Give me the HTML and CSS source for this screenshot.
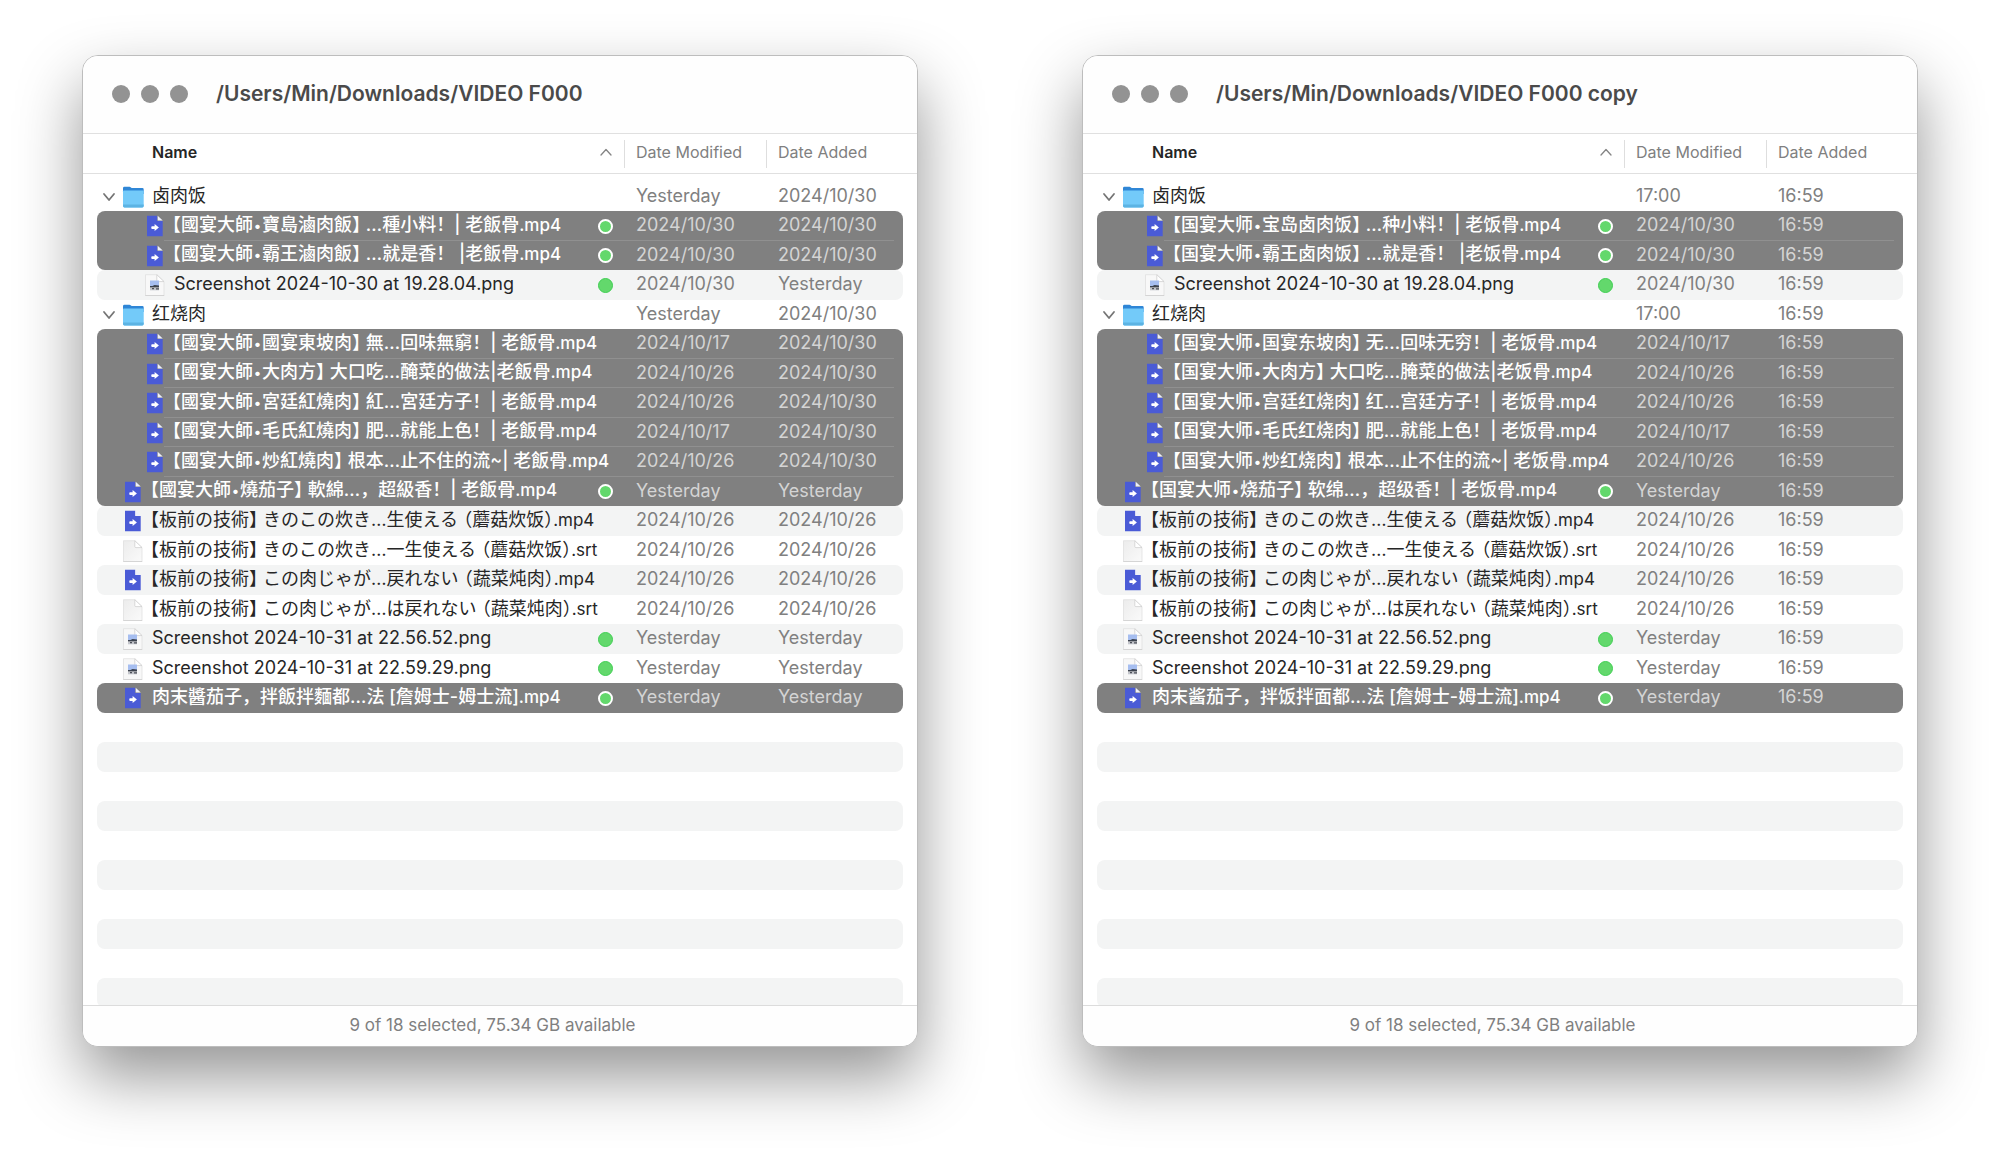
FILE: index.html
```html
<!DOCTYPE html>
<html lang="en">
<head>
<meta charset="utf-8">
<title>Downloads</title>
<link rel="stylesheet" href="styles.css">
</head>
<body>
<svg class="sprite" aria-hidden="true">
  <defs>
    <linearGradient id="paper" x1="0" y1="0" x2="1" y2="1"><stop offset="0" stop-color="#ececec"/><stop offset="1" stop-color="#fafafa"/></linearGradient>
  </defs>
  <symbol id="i-folder" viewBox="0 0 22 22">
    <path d="M1 2.2Q1 .8 2.400 .8H7.500Q8.300 .8 8.900 1.400L9.700 2.100H20.400Q21.700 2.100 21.700 3.400V8H1Z" fill="#2f86d6"/>
    <path d="M1 5.200Q1 4.400 1.800 4.400H20.900Q21.700 4.400 21.700 5.200V20Q21.700 21.400 20.300 21.400H2.400Q1 21.400 1 20Z" fill="#73caf9"/>
    <path d="M1 18.500H21.700V20Q21.700 21.400 20.300 21.400H2.400Q1 21.400 1 20Z" fill="#5cb3e3"/>
  </symbol>
  <symbol id="i-video" viewBox="0 0 22 22">
    <path d="M3 .8H13.200V6H18.700V21.300H3Z" fill="#4a5bd6"/>
    <path d="M13.700 .8L18.700 5.400H13.700Z" fill="#eef0fb"/>
    <path d="M7.300 12Q7.300 11.200 8.200 11.200H10.600V9L14.900 12.500L10.600 16V13.900H8.200Q7.300 13.900 7.300 13Z" fill="#fff"/>
  </symbol>
  <symbol id="i-doc" viewBox="0 0 22 22">
    <path d="M1.500 .7H12.800L20 7.600V21.600H1.500Z" fill="url(#paper)" stroke="#dcdcdc" stroke-width=".7"/>
    <path d="M12.800 .7V6.600Q12.800 7.600 13.800 7.600H20Z" fill="#fff" stroke="#cfcfcf" stroke-width=".8"/>
    <path d="M1.300 21.700H20.200" stroke="#c9c9c9" stroke-width=".8"/>
  </symbol>
  <symbol id="i-image" viewBox="0 0 22 22">
    <path d="M1.500 .7H12.800L20 7.600V21.600H1.500Z" fill="#f8f8f8" stroke="#dcdcdc" stroke-width=".7"/>
    <path d="M12.800 .7V6.600Q12.800 7.600 13.800 7.600H20Z" fill="#fff" stroke="#cfcfcf" stroke-width=".8"/>
    <path d="M6 6.500H15V12H6Z" fill="#a6bef0"/>
    <path d="M6 12H8.500L10.500 11L15 11.500V13.500H6Z" fill="#3c424e"/>
    <path d="M6 14H15V16.300H6Z" fill="#c4c6cc"/>
    <path d="M8 14.600H10M12 14.800H15" stroke="#4d5058" stroke-width="1.200"/>
    <path d="M1.300 21.700H20.200" stroke="#c9c9c9" stroke-width=".8"/>
  </symbol>
  <symbol id="i-down" viewBox="0 0 14 10">
    <path d="M2 2L7 8L12 2" fill="none" stroke="#757575" stroke-width="1.800" stroke-linecap="round" stroke-linejoin="round"/>
  </symbol>
  <symbol id="i-up" viewBox="0 0 14 10">
    <path d="M2 8L7 2.500L12 8" fill="none" stroke="#858585" stroke-width="1.300" stroke-linecap="round" stroke-linejoin="round"/>
  </symbol>
</svg>
<main class="desk">
<section class="window">
  <header class="titlebar">
    <button class="light" aria-label="Close"></button><button class="light" aria-label="Minimize"></button><button class="light" aria-label="Zoom"></button>
    <h1 class="title">/Users/Min/Downloads/VIDEO F000</h1>
  </header>
  <table class="files">
    <thead><tr><th class="head-name" scope="col">Name<svg class="sort"><use href="#i-up"/></svg></th><th class="head-date" scope="col">Date Modified</th><th class="head-date" scope="col">Date Added</th></tr></thead>
    <tbody>
      <tr><td class="name"><button class="toggle" aria-label="Collapse"><svg><use href="#i-down"/></svg></button><svg class="icon"><use href="#i-folder"/></svg><span class="text" lang="zh-Hans">卤肉饭</span></td><td class="date">Yesterday</td><td class="date">2024/10/30</td></tr>
      <tr class="sel first"><td class="name nested"><svg class="icon"><use href="#i-video"/></svg><span class="text" lang="zh-Hans"><b>【</b>國宴大師<small>•</small>寶島滷肉飯<b>】</b> …種小料！| 老飯骨<i>.mp4</i></span><span class="tag"></span></td><td class="date">2024/10/30</td><td class="date">2024/10/30</td></tr>
      <tr class="sel last"><td class="name nested"><svg class="icon"><use href="#i-video"/></svg><span class="text" lang="zh-Hans"><b>【</b>國宴大師<small>•</small>霸王滷肉飯<b>】</b> …就是香！ |老飯骨<i>.mp4</i></span><span class="tag"></span></td><td class="date">2024/10/30</td><td class="date">2024/10/30</td></tr>
      <tr><td class="name nested"><svg class="icon"><use href="#i-image"/></svg><span class="text">Screenshot 2024-10-30 at 19.28.04.png</span><span class="tag"></span></td><td class="date">2024/10/30</td><td class="date">Yesterday</td></tr>
      <tr><td class="name"><button class="toggle" aria-label="Collapse"><svg><use href="#i-down"/></svg></button><svg class="icon"><use href="#i-folder"/></svg><span class="text" lang="zh-Hans">红烧肉</span></td><td class="date">Yesterday</td><td class="date">2024/10/30</td></tr>
      <tr class="sel first"><td class="name nested"><svg class="icon"><use href="#i-video"/></svg><span class="text" lang="zh-Hans"><b>【</b>國宴大師<small>•</small>國宴東坡肉<b>】</b> 無…回味無窮！| 老飯骨<i>.mp4</i></span></td><td class="date">2024/10/17</td><td class="date">2024/10/30</td></tr>
      <tr class="sel"><td class="name nested"><svg class="icon"><use href="#i-video"/></svg><span class="text" lang="zh-Hans"><b>【</b>國宴大師<small>•</small>大肉方<b>】</b> 大口吃…醃菜的做法|老飯骨<i>.mp4</i></span></td><td class="date">2024/10/26</td><td class="date">2024/10/30</td></tr>
      <tr class="sel"><td class="name nested"><svg class="icon"><use href="#i-video"/></svg><span class="text" lang="zh-Hans"><b>【</b>國宴大師<small>•</small>宮廷紅燒肉<b>】</b> 紅…宮廷方子！| 老飯骨<i>.mp4</i></span></td><td class="date">2024/10/26</td><td class="date">2024/10/30</td></tr>
      <tr class="sel"><td class="name nested"><svg class="icon"><use href="#i-video"/></svg><span class="text" lang="zh-Hans"><b>【</b>國宴大師<small>•</small>毛氏紅燒肉<b>】</b> 肥…就能上色！| 老飯骨<i>.mp4</i></span></td><td class="date">2024/10/17</td><td class="date">2024/10/30</td></tr>
      <tr class="sel"><td class="name nested"><svg class="icon"><use href="#i-video"/></svg><span class="text" lang="zh-Hans"><b>【</b>國宴大師<small>•</small>炒紅燒肉<b>】</b> 根本…止不住的流~| 老飯骨<i>.mp4</i></span></td><td class="date">2024/10/26</td><td class="date">2024/10/30</td></tr>
      <tr class="sel last"><td class="name"><svg class="icon"><use href="#i-video"/></svg><span class="text" lang="zh-Hans"><b>【</b>國宴大師<small>•</small>燒茄子<b>】</b> 軟綿…，超級香！| 老飯骨<i>.mp4</i></span><span class="tag"></span></td><td class="date">Yesterday</td><td class="date">Yesterday</td></tr>
      <tr><td class="name"><svg class="icon"><use href="#i-video"/></svg><span class="text" lang="ja"><b>【</b>板前の技術<b>】</b> きのこの炊き…生使える <b>（</b>蘑菇炊饭<b>）</b><i>.mp4</i></span></td><td class="date">2024/10/26</td><td class="date">2024/10/26</td></tr>
      <tr><td class="name"><svg class="icon"><use href="#i-doc"/></svg><span class="text" lang="ja"><b>【</b>板前の技術<b>】</b> きのこの炊き…一生使える <b>（</b>蘑菇炊饭<b>）</b><i>.srt</i></span></td><td class="date">2024/10/26</td><td class="date">2024/10/26</td></tr>
      <tr><td class="name"><svg class="icon"><use href="#i-video"/></svg><span class="text" lang="ja"><b>【</b>板前の技術<b>】</b> この肉じゃが…戻れない <b>（</b>蔬菜炖肉<b>）</b><i>.mp4</i></span></td><td class="date">2024/10/26</td><td class="date">2024/10/26</td></tr>
      <tr><td class="name"><svg class="icon"><use href="#i-doc"/></svg><span class="text" lang="ja"><b>【</b>板前の技術<b>】</b> この肉じゃが…は戻れない <b>（</b>蔬菜炖肉<b>）</b><i>.srt</i></span></td><td class="date">2024/10/26</td><td class="date">2024/10/26</td></tr>
      <tr><td class="name"><svg class="icon"><use href="#i-image"/></svg><span class="text">Screenshot 2024-10-31 at 22.56.52.png</span><span class="tag"></span></td><td class="date">Yesterday</td><td class="date">Yesterday</td></tr>
      <tr><td class="name"><svg class="icon"><use href="#i-image"/></svg><span class="text">Screenshot 2024-10-31 at 22.59.29.png</span><span class="tag"></span></td><td class="date">Yesterday</td><td class="date">Yesterday</td></tr>
      <tr class="sel first last"><td class="name"><svg class="icon"><use href="#i-video"/></svg><span class="text" lang="zh-Hans">肉末醬茄子，拌飯拌麵都…法 [詹姆士-姆士流]<i>.mp4</i></span><span class="tag"></span></td><td class="date">Yesterday</td><td class="date">Yesterday</td></tr>
      <tr></tr><tr></tr><tr></tr><tr></tr><tr></tr><tr></tr><tr></tr><tr></tr><tr></tr><tr></tr>
    </tbody>
  </table>
  <footer class="status">9 of 18 selected, 75.34 GB available</footer>
</section>
<section class="window">
  <header class="titlebar">
    <button class="light" aria-label="Close"></button><button class="light" aria-label="Minimize"></button><button class="light" aria-label="Zoom"></button>
    <h1 class="title">/Users/Min/Downloads/VIDEO F000 copy</h1>
  </header>
  <table class="files">
    <thead><tr><th class="head-name" scope="col">Name<svg class="sort"><use href="#i-up"/></svg></th><th class="head-date" scope="col">Date Modified</th><th class="head-date" scope="col">Date Added</th></tr></thead>
    <tbody>
      <tr><td class="name"><button class="toggle" aria-label="Collapse"><svg><use href="#i-down"/></svg></button><svg class="icon"><use href="#i-folder"/></svg><span class="text" lang="zh-Hans">卤肉饭</span></td><td class="date">17:00</td><td class="date">16:59</td></tr>
      <tr class="sel first"><td class="name nested"><svg class="icon"><use href="#i-video"/></svg><span class="text" lang="zh-Hans"><b>【</b>国宴大师<small>•</small>宝岛卤肉饭<b>】</b> …种小料！| 老饭骨<i>.mp4</i></span><span class="tag"></span></td><td class="date">2024/10/30</td><td class="date">16:59</td></tr>
      <tr class="sel last"><td class="name nested"><svg class="icon"><use href="#i-video"/></svg><span class="text" lang="zh-Hans"><b>【</b>国宴大师<small>•</small>霸王卤肉饭<b>】</b> …就是香！ |老饭骨<i>.mp4</i></span><span class="tag"></span></td><td class="date">2024/10/30</td><td class="date">16:59</td></tr>
      <tr><td class="name nested"><svg class="icon"><use href="#i-image"/></svg><span class="text">Screenshot 2024-10-30 at 19.28.04.png</span><span class="tag"></span></td><td class="date">2024/10/30</td><td class="date">16:59</td></tr>
      <tr><td class="name"><button class="toggle" aria-label="Collapse"><svg><use href="#i-down"/></svg></button><svg class="icon"><use href="#i-folder"/></svg><span class="text" lang="zh-Hans">红烧肉</span></td><td class="date">17:00</td><td class="date">16:59</td></tr>
      <tr class="sel first"><td class="name nested"><svg class="icon"><use href="#i-video"/></svg><span class="text" lang="zh-Hans"><b>【</b>国宴大师<small>•</small>国宴东坡肉<b>】</b> 无…回味无穷！| 老饭骨<i>.mp4</i></span></td><td class="date">2024/10/17</td><td class="date">16:59</td></tr>
      <tr class="sel"><td class="name nested"><svg class="icon"><use href="#i-video"/></svg><span class="text" lang="zh-Hans"><b>【</b>国宴大师<small>•</small>大肉方<b>】</b> 大口吃…腌菜的做法|老饭骨<i>.mp4</i></span></td><td class="date">2024/10/26</td><td class="date">16:59</td></tr>
      <tr class="sel"><td class="name nested"><svg class="icon"><use href="#i-video"/></svg><span class="text" lang="zh-Hans"><b>【</b>国宴大师<small>•</small>宫廷红烧肉<b>】</b> 红…宫廷方子！| 老饭骨<i>.mp4</i></span></td><td class="date">2024/10/26</td><td class="date">16:59</td></tr>
      <tr class="sel"><td class="name nested"><svg class="icon"><use href="#i-video"/></svg><span class="text" lang="zh-Hans"><b>【</b>国宴大师<small>•</small>毛氏红烧肉<b>】</b> 肥…就能上色！| 老饭骨<i>.mp4</i></span></td><td class="date">2024/10/17</td><td class="date">16:59</td></tr>
      <tr class="sel"><td class="name nested"><svg class="icon"><use href="#i-video"/></svg><span class="text" lang="zh-Hans"><b>【</b>国宴大师<small>•</small>炒红烧肉<b>】</b> 根本…止不住的流~| 老饭骨<i>.mp4</i></span></td><td class="date">2024/10/26</td><td class="date">16:59</td></tr>
      <tr class="sel last"><td class="name"><svg class="icon"><use href="#i-video"/></svg><span class="text" lang="zh-Hans"><b>【</b>国宴大师<small>•</small>烧茄子<b>】</b> 软绵…，超级香！| 老饭骨<i>.mp4</i></span><span class="tag"></span></td><td class="date">Yesterday</td><td class="date">16:59</td></tr>
      <tr><td class="name"><svg class="icon"><use href="#i-video"/></svg><span class="text" lang="ja"><b>【</b>板前の技術<b>】</b> きのこの炊き…生使える <b>（</b>蘑菇炊饭<b>）</b><i>.mp4</i></span></td><td class="date">2024/10/26</td><td class="date">16:59</td></tr>
      <tr><td class="name"><svg class="icon"><use href="#i-doc"/></svg><span class="text" lang="ja"><b>【</b>板前の技術<b>】</b> きのこの炊き…一生使える <b>（</b>蘑菇炊饭<b>）</b><i>.srt</i></span></td><td class="date">2024/10/26</td><td class="date">16:59</td></tr>
      <tr><td class="name"><svg class="icon"><use href="#i-video"/></svg><span class="text" lang="ja"><b>【</b>板前の技術<b>】</b> この肉じゃが…戻れない <b>（</b>蔬菜炖肉<b>）</b><i>.mp4</i></span></td><td class="date">2024/10/26</td><td class="date">16:59</td></tr>
      <tr><td class="name"><svg class="icon"><use href="#i-doc"/></svg><span class="text" lang="ja"><b>【</b>板前の技術<b>】</b> この肉じゃが…は戻れない <b>（</b>蔬菜炖肉<b>）</b><i>.srt</i></span></td><td class="date">2024/10/26</td><td class="date">16:59</td></tr>
      <tr><td class="name"><svg class="icon"><use href="#i-image"/></svg><span class="text">Screenshot 2024-10-31 at 22.56.52.png</span><span class="tag"></span></td><td class="date">Yesterday</td><td class="date">16:59</td></tr>
      <tr><td class="name"><svg class="icon"><use href="#i-image"/></svg><span class="text">Screenshot 2024-10-31 at 22.59.29.png</span><span class="tag"></span></td><td class="date">Yesterday</td><td class="date">16:59</td></tr>
      <tr class="sel first last"><td class="name"><svg class="icon"><use href="#i-video"/></svg><span class="text" lang="zh-Hans">肉末酱茄子，拌饭拌面都…法 [詹姆士-姆士流]<i>.mp4</i></span><span class="tag"></span></td><td class="date">Yesterday</td><td class="date">16:59</td></tr>
      <tr></tr><tr></tr><tr></tr><tr></tr><tr></tr><tr></tr><tr></tr><tr></tr><tr></tr><tr></tr>
    </tbody>
  </table>
  <footer class="status">9 of 18 selected, 75.34 GB available</footer>
</section>
</main>
</body>
</html>
```
FILE: styles.css
```css
* { box-sizing: border-box; }

body {
  margin: 0;
  background: #fff;
  color: #262626;
  font-family: Inter, "Noto Sans CJK SC", sans-serif;
  font-size: 16px;
}

button { border: 0; padding: 0; background: none; }

.sprite { position: absolute; width: 0; height: 0; }

.desk {
  display: grid;
  grid-template-columns: 1fr 1fr;
  gap: 164px;
  height: 100vh;
  padding: 55px 82px 109px;
  overflow: hidden;
}

.window {
  display: flex;
  flex-direction: column;
  min-width: 0;
  min-height: 0;
  overflow: hidden;
  border: 1px solid #bdbdbd;
  border-radius: 16px;
  background: #fff;
  box-shadow: 0 30px 64px rgba(0, 0, 0, .42);
}

.titlebar {
  display: flex;
  align-items: center;
  gap: 11px;
  flex: none;
  height: 78px;
  padding: 0 0 2px 29px;
  border-bottom: 1px solid #e0e0e0;
  background: #fefefe;
}

.light {
  width: 18px;
  height: 18px;
  border-radius: 50%;
  background: #939393;
}

.title {
  margin: 0 0 0 17px;
  color: #4a4a4a;
  font-size: 21px;
  font-weight: 600;
  line-height: 28px;
}

.files {
  display: flex;
  flex-direction: column;
  flex: 1;
  min-height: 0;
}

.files thead {
  display: block;
  flex: none;
  padding: 0 14px;
  border-bottom: 1px solid #e0e0e0;
}

.files tbody {
  display: block;
  flex: 1;
  min-height: 0;
  padding: 8px 14px 0;
  overflow: hidden;
}

.files tr {
  display: grid;
  grid-template-columns: 1fr 142px 137px;
  align-items: center;
}

.files thead tr { height: 39px; }
.files tbody tr { height: 29px; border-radius: 8px; }
.files tbody tr:nth-child(even) { height: 30px; }
.files tbody tr:nth-child(even):not(.sel) { background: #f3f4f4; }

.head-name {
  display: flex;
  align-items: center;
  justify-content: space-between;
  padding: 0 11px 4px 55px;
  font-weight: 600;
}

.head-date {
  height: 28px;
  padding: 0 0 0 11px;
  border-left: 1px solid #dedede;
  color: #808080;
  font-weight: 400;
  line-height: 24px;
  text-align: left;
}

.sort { width: 14px; height: 10px; }

.name {
  display: flex;
  align-items: center;
  gap: 8px;
  min-width: 0;
  padding: 0 11px 0 25px;
}

.nested { padding-left: 47px; }

.toggle {
  display: flex;
  width: 14px;
  height: 10px;
  margin: 0 3px 0 -20px;
}

.toggle + .icon { margin-left: -5px; }
.toggle svg { width: 14px; height: 10px; }

.icon { flex: none; width: 22px; height: 22px; }

.text {
  flex: 1;
  padding-bottom: 2px;
  font-size: 18px;
  line-height: 26px;
  white-space: nowrap;
}

/* Latin extensions sit one step smaller than the ideographs beside them */
.text i { font-size: 17px; font-style: normal; }

/* half-width brackets */
.text b { font-weight: inherit; font-feature-settings: "halt"; }
.text b:first-child { margin-left: -2px; }

.text small {
  display: inline-block;
  width: 9px;
  font-size: 14px;
  text-align: center;
}

.tag {
  flex: none;
  width: 15px;
  height: 15px;
  border: 1px solid #3fcf52;
  border-radius: 50%;
  background: #63d86c;
}

.date {
  padding: 0 0 2px 12px;
  color: #808080;
  font-size: 18px;
  line-height: 26px;
}

.files tbody .sel {
  border-radius: 0;
  background: linear-gradient(#909090, #909090) 67px 100% / calc(100% - 76px) 1px no-repeat #808080;
}

.files tbody .first { border-top-left-radius: 8px; border-top-right-radius: 8px; }
.files tbody .last { border-bottom-left-radius: 8px; border-bottom-right-radius: 8px; background: #808080; }

.sel .text { color: #fff; font-weight: 500; }
.sel .date { color: #d4d4d4; }
.sel .tag { border: 2px solid #fff; }

.status {
  flex: none;
  height: 41px;
  padding-right: 15px;
  border-top: 1px solid #dcdcdc;
  background: #fefefe;
  color: #808080;
  font-size: 17px;
  line-height: 38px;
  text-align: center;
}
```
